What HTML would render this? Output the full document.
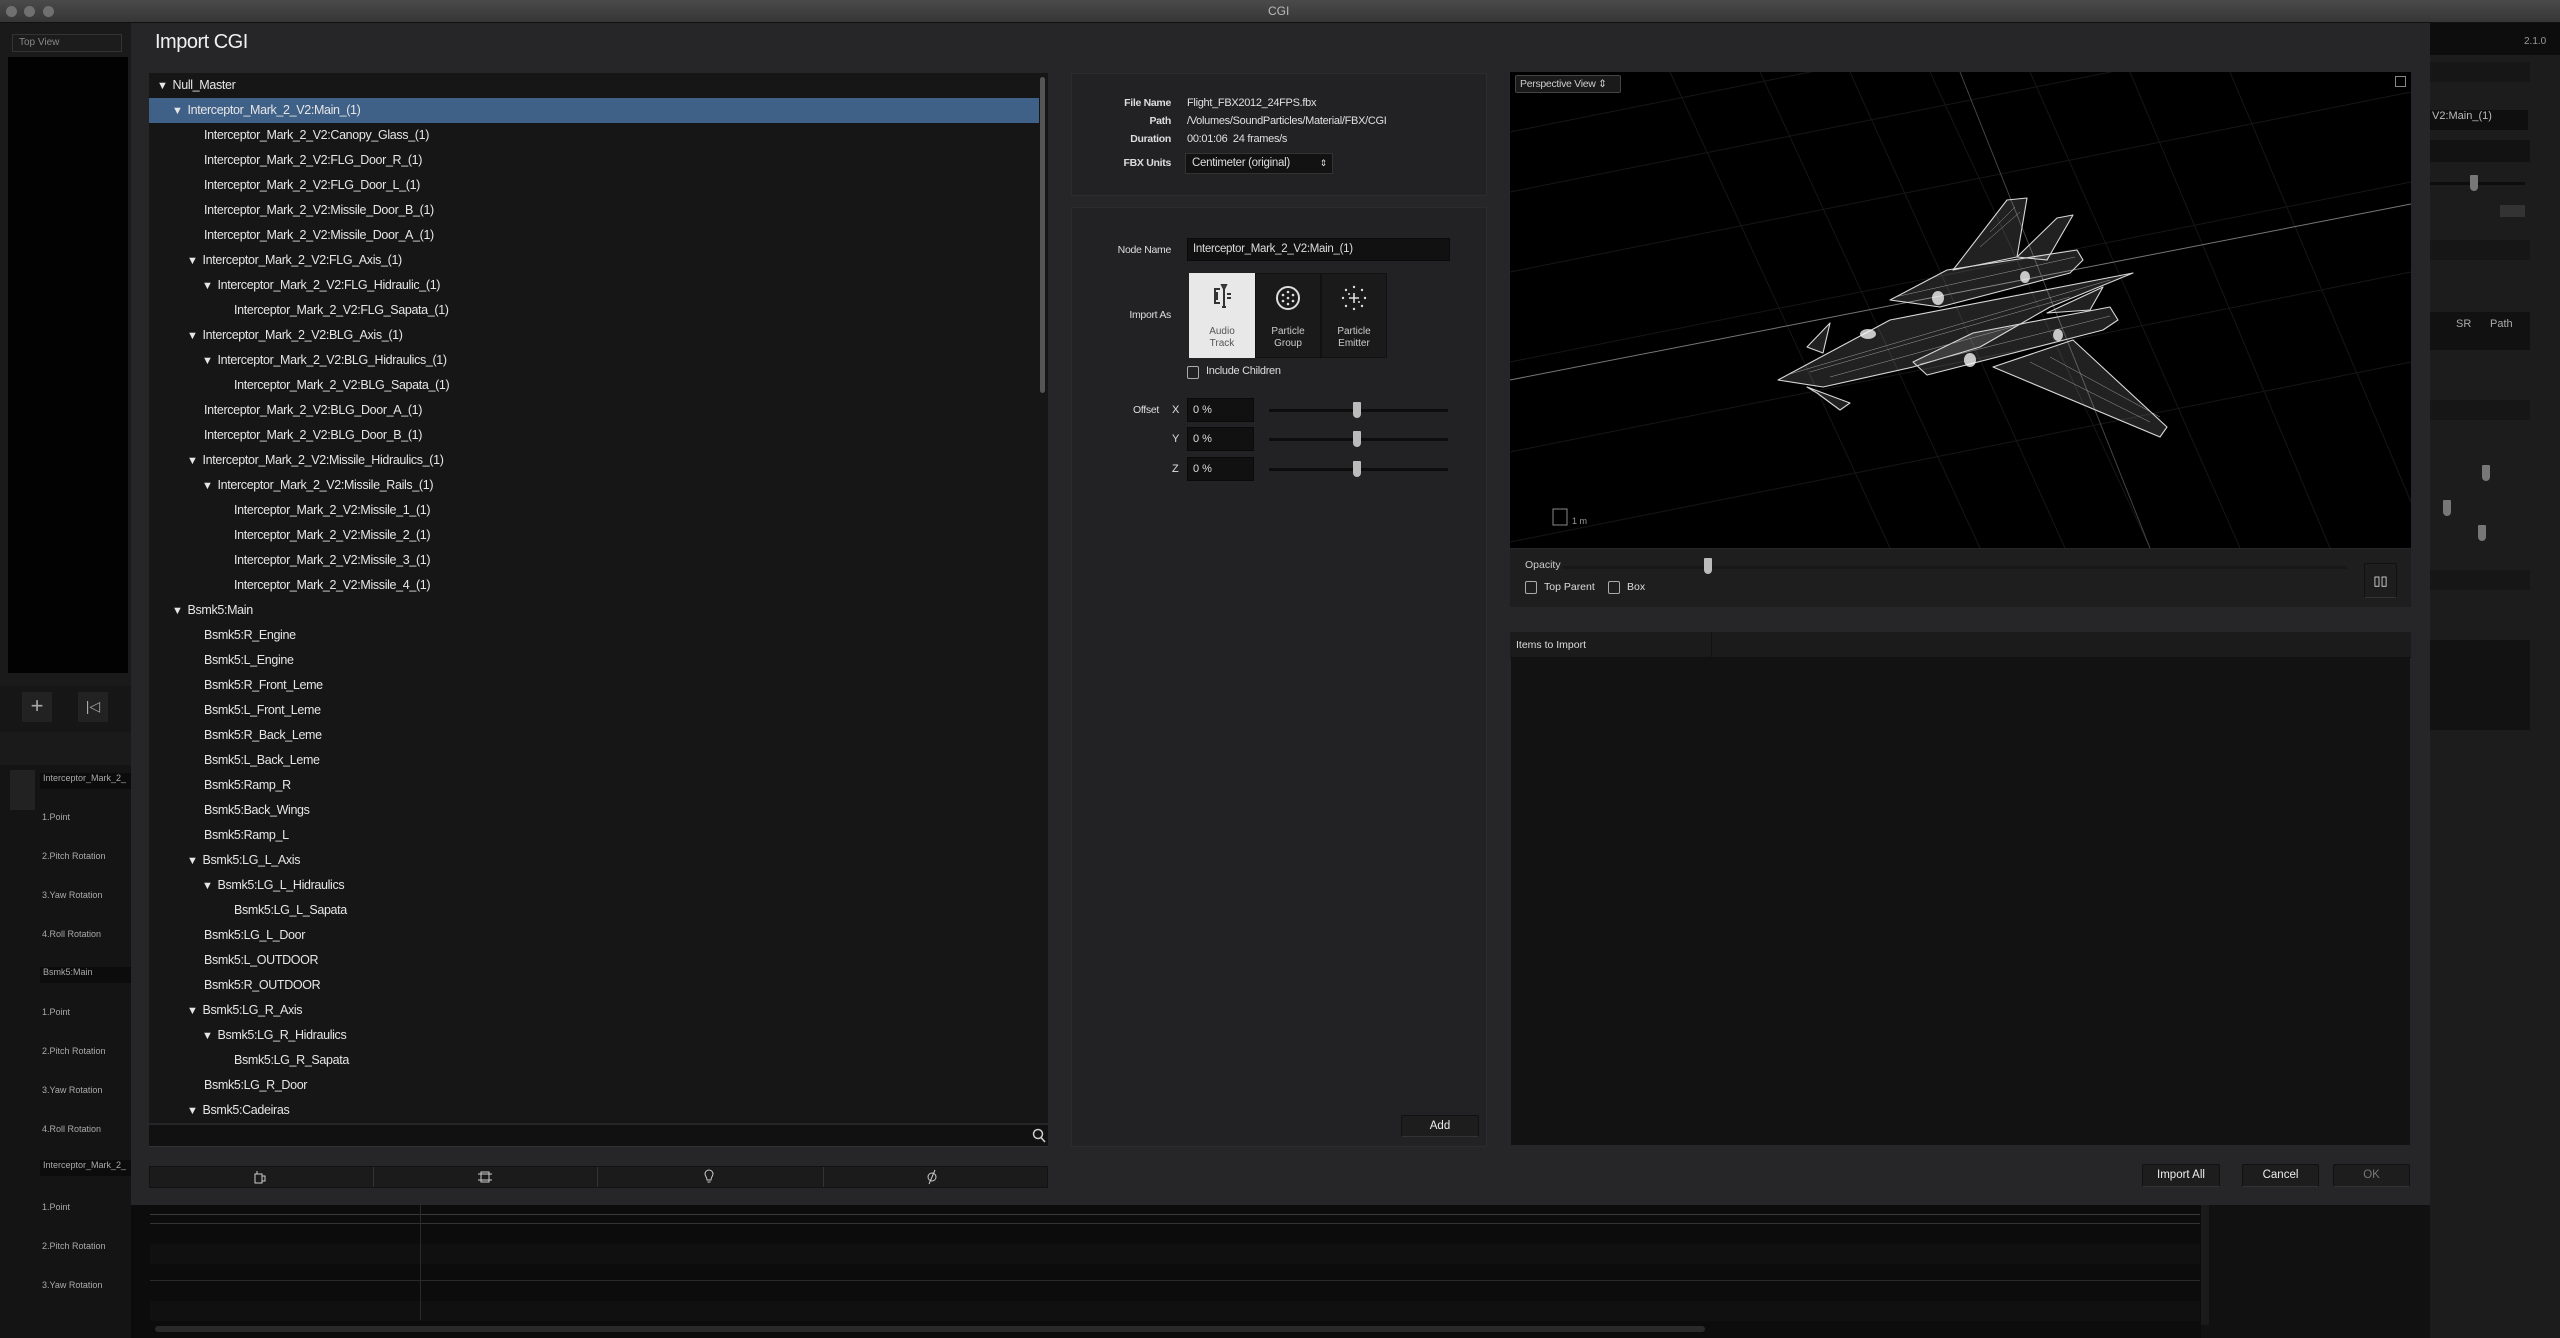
<!DOCTYPE html>
<html><head><meta charset="utf-8"><style>
*{box-sizing:border-box;margin:0;padding:0}
body{width:2560px;height:1338px;background:#111;font-family:"Liberation Sans",sans-serif;color:#ddd;position:relative;overflow:hidden;font-size:12px}
.a{position:absolute}
.tb{left:0;top:0;width:2560px;height:23px;background:linear-gradient(#4a4a4a,#363636);border-bottom:1px solid #111}
.dot{width:11px;height:11px;border-radius:50%;background:#707070;top:6px}
.dlg{left:131px;top:23px;width:2299px;height:1182px;background:#262628}
.tree{left:149px;top:73px;width:899px;height:1050px;background:#161617}
.r{position:absolute;left:0;width:890px;height:25px;line-height:25px;font-size:12.5px;letter-spacing:-0.35px;color:#e6e6e6;white-space:nowrap}
.r.s{background:#3f6188}
.t{font-size:11px;margin-right:5px}
.lab{font-size:10.5px;color:#ddd;text-align:right;width:80px;font-weight:bold;letter-spacing:-0.3px}
.val{font-size:11px;color:#e0e0e0;letter-spacing:-0.3px}
.btn{background:#1d1d1e;border:1px solid #111;border-bottom-color:#333;color:#eee;font-size:11.5px;text-align:center;border-radius:2px}
.inp{background:#111;border:1px solid #0a0a0a;color:#ddd;font-size:11px;padding-left:5px}
.cb{width:12px;height:13px;border:1px solid #aaa;border-radius:2px}
.sl{height:3px;background:#0d0d0d}
.kn{width:8px;height:16px;background:#bbb;border-radius:1px 1px 4px 4px}
.small{font-size:10px;color:#aaa}
</style></head><body>
<div class="a tb"></div>
<div class="a dot" style="left:6px"></div><div class="a dot" style="left:24px"></div><div class="a dot" style="left:43px"></div>
<div class="a" style="left:1268px;top:4px;font-size:12px;color:#bbb">CGI</div>

<!-- left background app -->
<div class="a" style="left:0;top:23px;width:131px;height:1315px;background:#1a1a1a"></div>
<div class="a" style="left:8px;top:57px;width:120px;height:616px;background:#020202"></div>
<div class="a" style="left:12px;top:34px;width:110px;height:18px;background:#1c1c1c;border:1px solid #333;font-size:10px;color:#888;padding-left:6px;line-height:16px">Top View</div>
<div class="a" style="left:0;top:686px;width:131px;height:46px;background:#161616"></div>
<div class="a" style="left:22px;top:692px;width:30px;height:30px;background:#222;color:#aaa;font-size:22px;text-align:center;line-height:28px">+</div>
<div class="a" style="left:78px;top:692px;width:30px;height:30px;background:#222;color:#aaa;font-size:14px;text-align:center;line-height:28px">|◁</div>
<div class="a" style="left:0;top:765px;width:131px;height:573px;background:#141414"></div>
<div class="a" style="left:10px;top:770px;width:25px;height:40px;background:#222"></div>
<div class="a small" style="left:40px;top:773px;width:91px;height:16px;background:#0c0c0c;padding-left:3px;font-size:9px">Interceptor_Mark_2_</div>
<div class="a small" style="left:42px;top:812px;font-size:9px">1.Point</div>
<div class="a small" style="left:42px;top:851px;font-size:9px">2.Pitch Rotation</div>
<div class="a small" style="left:42px;top:890px;font-size:9px">3.Yaw Rotation</div>
<div class="a small" style="left:42px;top:929px;font-size:9px">4.Roll Rotation</div>
<div class="a small" style="left:40px;top:967px;width:91px;height:16px;background:#0c0c0c;padding-left:3px;font-size:9px">Bsmk5:Main</div>
<div class="a small" style="left:42px;top:1007px;font-size:9px">1.Point</div>
<div class="a small" style="left:42px;top:1046px;font-size:9px">2.Pitch Rotation</div>
<div class="a small" style="left:42px;top:1085px;font-size:9px">3.Yaw Rotation</div>
<div class="a small" style="left:42px;top:1124px;font-size:9px">4.Roll Rotation</div>
<div class="a small" style="left:40px;top:1160px;width:91px;height:16px;background:#0c0c0c;padding-left:3px;font-size:9px">Interceptor_Mark_2_</div>
<div class="a small" style="left:42px;top:1202px;font-size:9px">1.Point</div>
<div class="a small" style="left:42px;top:1241px;font-size:9px">2.Pitch Rotation</div>
<div class="a small" style="left:42px;top:1280px;font-size:9px">3.Yaw Rotation</div>

<!-- bottom timeline -->
<div class="a" style="left:131px;top:1205px;width:2070px;height:133px;background:#0c0c0c"></div>
<div class="a" style="left:150px;top:1214px;width:2050px;height:1px;background:#3a3a3a"></div>
<div class="a" style="left:150px;top:1223px;width:2050px;height:1px;background:#333"></div>
<div class="a" style="left:150px;top:1244px;width:2050px;height:20px;background:#101010"></div>
<div class="a" style="left:150px;top:1280px;width:2050px;height:1px;background:#2a2a2a"></div>
<div class="a" style="left:150px;top:1301px;width:2050px;height:20px;background:#101010"></div>
<div class="a" style="left:420px;top:1205px;width:1px;height:115px;background:#2a2a2a"></div>
<div class="a" style="left:155px;top:1326px;width:1550px;height:6px;background:#2a2a2a;border-radius:3px"></div>
<div class="a" style="left:2201px;top:1205px;width:8px;height:120px;background:#1a1a1a"></div>

<!-- right background -->
<div class="a" style="left:2430px;top:23px;width:130px;height:1315px;background:#1c1c1d"></div>
<div class="a" style="left:2430px;top:23px;width:130px;height:32px;background:#0d0d0d"></div>
<div class="a" style="left:2524px;top:36px;font-size:10px;color:#999">2.1.0</div>
<div class="a" style="left:2430px;top:62px;width:100px;height:20px;background:#161616"></div>
<div class="a" style="left:2430px;top:110px;width:98px;height:20px;background:#0f0f0f;font-size:11px;color:#bbb;padding-left:2px">V2:Main_(1)</div>
<div class="a" style="left:2430px;top:140px;width:100px;height:22px;background:#121212"></div>
<div class="a sl" style="left:2430px;top:182px;width:95px;background:#0d0d0d"></div>
<div class="a kn" style="left:2470px;top:175px;background:#777"></div>
<div class="a" style="left:2500px;top:205px;width:25px;height:12px;background:#333"></div>
<div class="a" style="left:2430px;top:240px;width:100px;height:20px;background:#161616"></div>
<div class="a" style="left:2430px;top:312px;width:100px;height:38px;background:#111"></div>
<div class="a" style="left:2456px;top:318px;font-size:11px;color:#aaa">SR</div>
<div class="a" style="left:2490px;top:318px;font-size:11px;color:#aaa">Path</div>
<div class="a" style="left:2430px;top:400px;width:100px;height:20px;background:#161616"></div>
<div class="a kn" style="left:2482px;top:465px;background:#777"></div>
<div class="a kn" style="left:2443px;top:500px;background:#777"></div>
<div class="a kn" style="left:2478px;top:525px;background:#777"></div>
<div class="a" style="left:2430px;top:570px;width:100px;height:20px;background:#161616"></div>
<div class="a" style="left:2430px;top:640px;width:100px;height:90px;background:#121212"></div>

<!-- dialog -->
<div class="a dlg"></div>
<div class="a" style="left:155px;top:31px;font-size:20px;color:#f0f0f0;letter-spacing:-0.5px">Import CGI</div>

<div class="a tree">
<div class="r" style="top:0"><span style="margin-left:8px" class="t">▼</span>Null_Master</div>
<div class="r s" style="top:25px"><span style="margin-left:23px" class="t">▼</span>Interceptor_Mark_2_V2:Main_(1)</div>
<div class="r" style="top:50px;padding-left:55px">Interceptor_Mark_2_V2:Canopy_Glass_(1)</div>
<div class="r" style="top:75px;padding-left:55px">Interceptor_Mark_2_V2:FLG_Door_R_(1)</div>
<div class="r" style="top:100px;padding-left:55px">Interceptor_Mark_2_V2:FLG_Door_L_(1)</div>
<div class="r" style="top:125px;padding-left:55px">Interceptor_Mark_2_V2:Missile_Door_B_(1)</div>
<div class="r" style="top:150px;padding-left:55px">Interceptor_Mark_2_V2:Missile_Door_A_(1)</div>
<div class="r" style="top:175px"><span style="margin-left:38px" class="t">▼</span>Interceptor_Mark_2_V2:FLG_Axis_(1)</div>
<div class="r" style="top:200px"><span style="margin-left:53px" class="t">▼</span>Interceptor_Mark_2_V2:FLG_Hidraulic_(1)</div>
<div class="r" style="top:225px;padding-left:85px">Interceptor_Mark_2_V2:FLG_Sapata_(1)</div>
<div class="r" style="top:250px"><span style="margin-left:38px" class="t">▼</span>Interceptor_Mark_2_V2:BLG_Axis_(1)</div>
<div class="r" style="top:275px"><span style="margin-left:53px" class="t">▼</span>Interceptor_Mark_2_V2:BLG_Hidraulics_(1)</div>
<div class="r" style="top:300px;padding-left:85px">Interceptor_Mark_2_V2:BLG_Sapata_(1)</div>
<div class="r" style="top:325px;padding-left:55px">Interceptor_Mark_2_V2:BLG_Door_A_(1)</div>
<div class="r" style="top:350px;padding-left:55px">Interceptor_Mark_2_V2:BLG_Door_B_(1)</div>
<div class="r" style="top:375px"><span style="margin-left:38px" class="t">▼</span>Interceptor_Mark_2_V2:Missile_Hidraulics_(1)</div>
<div class="r" style="top:400px"><span style="margin-left:53px" class="t">▼</span>Interceptor_Mark_2_V2:Missile_Rails_(1)</div>
<div class="r" style="top:425px;padding-left:85px">Interceptor_Mark_2_V2:Missile_1_(1)</div>
<div class="r" style="top:450px;padding-left:85px">Interceptor_Mark_2_V2:Missile_2_(1)</div>
<div class="r" style="top:475px;padding-left:85px">Interceptor_Mark_2_V2:Missile_3_(1)</div>
<div class="r" style="top:500px;padding-left:85px">Interceptor_Mark_2_V2:Missile_4_(1)</div>
<div class="r" style="top:525px"><span style="margin-left:23px" class="t">▼</span>Bsmk5:Main</div>
<div class="r" style="top:550px;padding-left:55px">Bsmk5:R_Engine</div>
<div class="r" style="top:575px;padding-left:55px">Bsmk5:L_Engine</div>
<div class="r" style="top:600px;padding-left:55px">Bsmk5:R_Front_Leme</div>
<div class="r" style="top:625px;padding-left:55px">Bsmk5:L_Front_Leme</div>
<div class="r" style="top:650px;padding-left:55px">Bsmk5:R_Back_Leme</div>
<div class="r" style="top:675px;padding-left:55px">Bsmk5:L_Back_Leme</div>
<div class="r" style="top:700px;padding-left:55px">Bsmk5:Ramp_R</div>
<div class="r" style="top:725px;padding-left:55px">Bsmk5:Back_Wings</div>
<div class="r" style="top:750px;padding-left:55px">Bsmk5:Ramp_L</div>
<div class="r" style="top:775px"><span style="margin-left:38px" class="t">▼</span>Bsmk5:LG_L_Axis</div>
<div class="r" style="top:800px"><span style="margin-left:53px" class="t">▼</span>Bsmk5:LG_L_Hidraulics</div>
<div class="r" style="top:825px;padding-left:85px">Bsmk5:LG_L_Sapata</div>
<div class="r" style="top:850px;padding-left:55px">Bsmk5:LG_L_Door</div>
<div class="r" style="top:875px;padding-left:55px">Bsmk5:L_OUTDOOR</div>
<div class="r" style="top:900px;padding-left:55px">Bsmk5:R_OUTDOOR</div>
<div class="r" style="top:925px"><span style="margin-left:38px" class="t">▼</span>Bsmk5:LG_R_Axis</div>
<div class="r" style="top:950px"><span style="margin-left:53px" class="t">▼</span>Bsmk5:LG_R_Hidraulics</div>
<div class="r" style="top:975px;padding-left:85px">Bsmk5:LG_R_Sapata</div>
<div class="r" style="top:1000px;padding-left:55px">Bsmk5:LG_R_Door</div>
<div class="r" style="top:1025px"><span style="margin-left:38px" class="t">▼</span>Bsmk5:Cadeiras</div>
<div class="a" style="left:891px;top:4px;width:5px;height:316px;background:#555;border-radius:3px"></div>
</div>
<div class="a" style="left:149px;top:1125px;width:899px;height:22px;background:#111;border-bottom:1px solid #333"></div>
<svg class="a" style="left:1032px;top:1128px" width="14" height="16"><circle cx="6" cy="6" r="4.5" fill="none" stroke="#ccc" stroke-width="1.5"/><line x1="9" y1="9.5" x2="13" y2="14" stroke="#ccc" stroke-width="1.6"/></svg>
<div class="a" style="left:149px;top:1166px;width:899px;height:22px;background:#1b1b1c;border:1px solid #111"></div>
<div class="a" style="left:373px;top:1167px;width:1px;height:20px;background:#333"></div>
<div class="a" style="left:597px;top:1167px;width:1px;height:20px;background:#333"></div>
<div class="a" style="left:823px;top:1167px;width:1px;height:20px;background:#333"></div>
<svg class="a" style="left:253px;top:1170px" width="14" height="14"><rect x="2" y="4" width="7" height="9" fill="none" stroke="#ccc"/><rect x="9" y="6" width="3" height="5" fill="none" stroke="#ccc"/><line x1="4" y1="1" x2="4" y2="4" stroke="#ccc"/></svg>
<svg class="a" style="left:478px;top:1169px" width="14" height="16"><rect x="3" y="3" width="8" height="10" fill="none" stroke="#ccc"/><line x1="0" y1="5" x2="14" y2="5" stroke="#ccc"/><line x1="0" y1="11" x2="14" y2="11" stroke="#ccc"/></svg>
<svg class="a" style="left:703px;top:1169px" width="12" height="16"><path d="M6 1a4 4 0 0 1 4 4c0 2-2 3-2 6H4c0-3-2-4-2-6a4 4 0 0 1 4-4zM4.5 13h3" fill="none" stroke="#ccc"/></svg>
<svg class="a" style="left:926px;top:1169px" width="12" height="16"><circle cx="6" cy="8" r="4" fill="none" stroke="#ccc"/><line x1="9" y1="1" x2="3" y2="15" stroke="#ccc"/></svg>

<!-- middle panel -->
<div class="a" style="left:1071px;top:73px;width:416px;height:123px;background:#222224;border:1px solid #2c2c2e"></div>
<div class="a lab" style="left:1091px;top:97px">File Name</div><div class="a val" style="left:1187px;top:97px">Flight_FBX2012_24FPS.fbx</div>
<div class="a lab" style="left:1091px;top:115px">Path</div><div class="a val" style="left:1187px;top:115px">/Volumes/SoundParticles/Material/FBX/CGI</div>
<div class="a lab" style="left:1091px;top:133px">Duration</div><div class="a val" style="left:1187px;top:133px">00:01:06&nbsp;&nbsp;24 frames/s</div>
<div class="a lab" style="left:1091px;top:157px">FBX Units</div>
<div class="a" style="left:1185px;top:153px;width:148px;height:21px;background:#121213;border:1px solid #333;font-size:11.5px;color:#ddd;padding-left:6px;line-height:19px;letter-spacing:-0.3px">Centimeter (original)<span style="position:absolute;right:5px;top:0;font-size:9px">⇕</span></div>
<div class="a" style="left:1071px;top:207px;width:416px;height:940px;background:#222224;border:1px solid #2c2c2e"></div>
<div class="a lab" style="left:1091px;top:244px;font-weight:normal">Node Name</div>
<div class="a inp" style="left:1187px;top:238px;width:263px;height:23px;line-height:21px;font-size:11.5px;letter-spacing:-0.3px">Interceptor_Mark_2_V2:Main_(1)</div>
<div class="a lab" style="left:1091px;top:309px;font-weight:normal">Import As</div>
<div class="a" style="left:1189px;top:273px;width:66px;height:85px;background:#e8e8e8"></div>
<div class="a" style="left:1255px;top:273px;width:66px;height:85px;background:#1a1a1b;border:1px solid #111"></div>
<div class="a" style="left:1321px;top:273px;width:66px;height:85px;background:#1a1a1b;border:1px solid #111"></div>
<svg class="a" style="left:1209px;top:283px" width="26" height="28"><path d="M11 6H6v14h5M8 9v8" fill="none" stroke="#333" stroke-width="2"/><path d="M13 2h4l-2 4zM15 6v18M13 24h4" fill="none" stroke="#333" stroke-width="2"/><path d="M18 11h4M18 15h4" stroke="#333" stroke-width="2"/></svg>
<div class="a" style="left:1189px;top:326px;width:66px;text-align:center;font-size:10px;color:#555;line-height:12px">Audio<br>Track</div>
<svg class="a" style="left:1274px;top:284px" width="28" height="28"><circle cx="14" cy="14" r="11" fill="none" stroke="#ddd" stroke-width="2"/><g fill="#ddd"><circle cx="14" cy="8" r="1.3"/><circle cx="9" cy="11" r="1.3"/><circle cx="19" cy="11" r="1.3"/><circle cx="14" cy="14" r="1.3"/><circle cx="9" cy="17" r="1.3"/><circle cx="19" cy="17" r="1.3"/><circle cx="14" cy="20" r="1.3"/></g></svg>
<div class="a" style="left:1255px;top:326px;width:66px;text-align:center;font-size:10px;color:#ccc;line-height:12px">Particle<br>Group</div>
<svg class="a" style="left:1340px;top:284px" width="28" height="28"><g fill="#ddd"><circle cx="14" cy="3" r="1.2"/><circle cx="14" cy="25" r="1.2"/><circle cx="3" cy="14" r="1.2"/><circle cx="25" cy="14" r="1.2"/><circle cx="6" cy="6" r="1.2"/><circle cx="22" cy="6" r="1.2"/><circle cx="6" cy="22" r="1.2"/><circle cx="22" cy="22" r="1.2"/><circle cx="9" cy="10" r="1"/><circle cx="19" cy="18" r="1"/></g><path d="M14 9v10M9 14h10" stroke="#ddd" stroke-width="1.6"/></svg>
<div class="a" style="left:1321px;top:326px;width:66px;text-align:center;font-size:10px;color:#ccc;line-height:12px">Particle<br>Emitter</div>
<div class="a cb" style="left:1187px;top:366px"></div>
<div class="a" style="left:1206px;top:365px;font-size:11px;letter-spacing:-0.3px">Include Children</div>
<div class="a lab" style="left:1079px;top:404px;font-weight:normal">Offset</div>
<div class="a val" style="left:1172px;top:404px">X</div><div class="a val" style="left:1172px;top:433px">Y</div><div class="a val" style="left:1172px;top:463px">Z</div>
<div class="a inp" style="left:1187px;top:398px;width:67px;height:24px;line-height:22px">0 %</div>
<div class="a inp" style="left:1187px;top:427px;width:67px;height:24px;line-height:22px">0 %</div>
<div class="a inp" style="left:1187px;top:457px;width:67px;height:24px;line-height:22px">0 %</div>
<div class="a sl" style="left:1269px;top:409px;width:179px"></div><div class="a kn" style="left:1353px;top:402px"></div>
<div class="a sl" style="left:1269px;top:438px;width:179px"></div><div class="a kn" style="left:1353px;top:431px"></div>
<div class="a sl" style="left:1269px;top:468px;width:179px"></div><div class="a kn" style="left:1353px;top:461px"></div>
<div class="a btn" style="left:1401px;top:1115px;width:78px;height:22px;line-height:20px">Add</div>

<!-- viewport -->
<div class="a" style="left:1510px;top:72px;width:901px;height:476px;background:#000;overflow:hidden">
<svg width="901" height="476" style="position:absolute;left:0;top:0">
<g stroke="#161616" stroke-width="1">
<line x1="340" y1="0" x2="555" y2="476"/><line x1="420" y1="0" x2="640" y2="476"/><line x1="250" y1="0" x2="470" y2="476"/><line x1="520" y1="0" x2="730" y2="476"/><line x1="160" y1="0" x2="380" y2="476"/><line x1="620" y1="0" x2="820" y2="476"/><line x1="720" y1="0" x2="901" y2="430"/>
<line x1="0" y1="120" x2="901" y2="-60"/><line x1="0" y1="200" x2="901" y2="20"/><line x1="0" y1="290" x2="901" y2="110"/><line x1="0" y1="380" x2="901" y2="200"/><line x1="0" y1="470" x2="901" y2="290"/><line x1="0" y1="60" x2="901" y2="-120"/>
</g>
<line x1="0" y1="308" x2="901" y2="132" stroke="#777" stroke-width="1"/>
<line x1="450" y1="0" x2="640" y2="476" stroke="#444" stroke-width="1"/>
<g fill="rgba(255,255,255,0.13)" stroke="#d8d8d8" stroke-width="1.1" stroke-linejoin="round">
<path d="M483 295 L563 268 L657 355 L650 365 Z"/>
<path d="M443 198 L497 128 L517 126 L507 185 Z"/>
<path d="M507 185 L547 146 L563 143 L537 188 Z"/>
<path d="M537 241 L593 215 L580 238 Z"/>
<path d="M268 308 L380 248 L623 201 L540 235 L470 275 L403 295 L313 315 Z"/>
<path d="M380 228 L437 198 L567 178 L573 188 L560 201 L430 235 Z"/>
<path d="M403 290 L463 261 L600 235 L608 248 L593 258 L417 303 Z"/>
<path d="M297 275 L320 251 L313 281 Z"/>
<path d="M297 315 L340 331 L330 338 L307 321 Z"/>
</g>
<g stroke="#bbb" stroke-width="0.5" opacity="0.8" fill="none">
<line x1="280" y1="302" x2="600" y2="208"/><line x1="300" y1="300" x2="560" y2="225"/><line x1="320" y1="305" x2="520" y2="250"/>
<line x1="385" y1="225" x2="565" y2="185"/><line x1="410" y1="292" x2="600" y2="244"/>
<line x1="480" y1="160" x2="505" y2="135"/><line x1="470" y1="175" x2="510" y2="140"/>
<line x1="520" y1="290" x2="640" y2="350"/><line x1="540" y1="285" x2="650" y2="345"/>
</g>
<g fill="#fff" opacity="0.75"><ellipse cx="428" cy="226" rx="6" ry="7"/><ellipse cx="515" cy="205" rx="5" ry="6"/><ellipse cx="460" cy="288" rx="6" ry="7"/><ellipse cx="548" cy="263" rx="5" ry="6"/><ellipse cx="358" cy="262" rx="8" ry="5"/></g>
<rect x="43" y="437" width="14" height="16" fill="none" stroke="#888"/>
<text x="62" y="452" fill="#999" font-size="9" font-family="Liberation Sans">1 m</text>
</svg>
<div class="a" style="left:5px;top:3px;width:106px;height:18px;background:#1a1a1a;border:1px solid #444;border-radius:2px;font-size:10.5px;color:#ccc;padding-left:4px;line-height:16px;letter-spacing:-0.3px">Perspective View ⇕</div>
<div class="a" style="left:885px;top:4px;width:11px;height:11px;border:1px solid #888"></div>
</div>
<div class="a" style="left:1510px;top:549px;width:901px;height:58px;background:#1e1e1f"></div>
<div class="a" style="left:1525px;top:559px;font-size:10.5px;color:#ccc">Opacity</div>
<div class="a sl" style="left:1562px;top:566px;width:785px;background:#181818"></div>
<div class="a kn" style="left:1704px;top:558px"></div>
<div class="a cb" style="left:1525px;top:581px"></div><div class="a" style="left:1544px;top:581px;font-size:10.5px">Top Parent</div>
<div class="a cb" style="left:1608px;top:581px"></div><div class="a" style="left:1627px;top:581px;font-size:10.5px">Box</div>
<div class="a btn" style="left:2364px;top:563px;width:33px;height:35px;line-height:33px;font-size:13px">▯▯</div>
<div class="a" style="left:1510px;top:632px;width:901px;height:514px;background:#121213;border:1px solid #262628"></div>
<div class="a" style="left:1510px;top:632px;width:901px;height:26px;background:#1b1b1c;border-bottom:1px solid #111"></div>
<div class="a" style="left:1711px;top:632px;width:1px;height:26px;background:#111"></div>
<div class="a" style="left:1516px;top:639px;font-size:10.5px;color:#ddd">Items to Import</div>
<div class="a btn" style="left:2142px;top:1164px;width:78px;height:23px;line-height:21px">Import All</div>
<div class="a btn" style="left:2242px;top:1164px;width:77px;height:23px;line-height:21px">Cancel</div>
<div class="a btn" style="left:2333px;top:1164px;width:77px;height:23px;line-height:21px;color:#777">OK</div>
</body></html>
